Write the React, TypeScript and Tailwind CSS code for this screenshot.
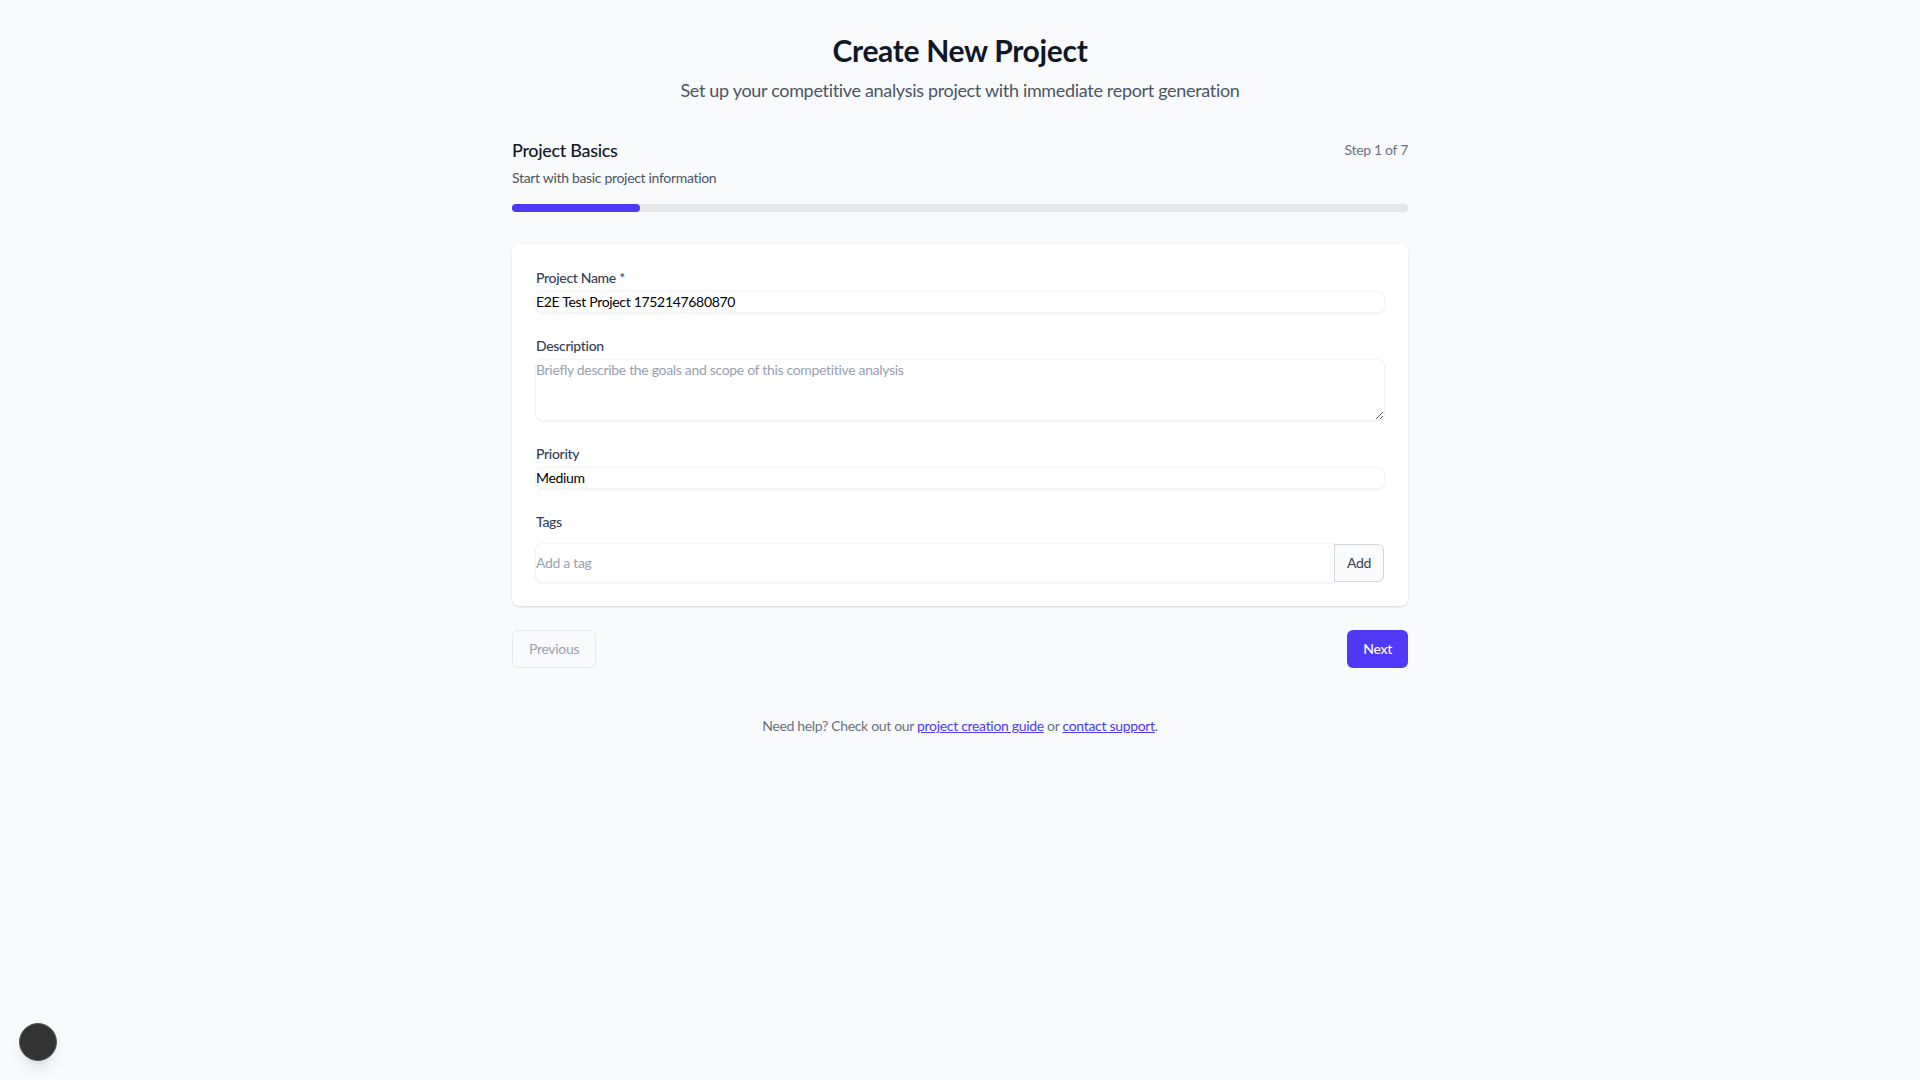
import { useState } from 'react';

const TOTAL_STEPS = 7;

export default function App() {
  const [name, setName] = useState('E2E Test Project 1752147680870');
  const [description, setDescription] = useState('');
  const [priority, setPriority] = useState('medium');
  const [tag, setTag] = useState('');
  const step = 1;

  return (
    <div
      className="min-h-screen bg-gray-50 tracking-[-0.02em]"
      style={{ fontFamily: 'Lato, "Noto Sans", sans-serif' }}
    >
      <div className="max-w-4xl mx-auto py-8">
        {/* Titolo */}
        <div className="text-center mb-8">
          <h1 className="text-3xl font-bold text-gray-900 mb-2">Create New Project</h1>
          <p className="text-lg text-gray-600">
            Set up your competitive analysis project with immediate report generation
          </p>
        </div>

        {/* Step header + progress */}
        <div className="mb-8">
          <div className="flex items-start justify-between">
            <div>
              <h2 className="text-lg font-medium text-gray-900">Project Basics</h2>
              <p className="mt-1 text-sm text-gray-600">Start with basic project information</p>
            </div>
            <span className="text-sm text-gray-500 pt-1">
              Step {step} of {TOTAL_STEPS}
            </span>
          </div>
          <div className="mt-4 h-2 w-full rounded-full bg-gray-200">
            <div
              className="h-2 rounded-full bg-indigo-600"
              style={{ width: `${(step / TOTAL_STEPS) * 100}%` }}
            />
          </div>
        </div>

        {/* Form */}
        <div className="bg-white rounded-lg shadow-sm p-6 flex flex-col gap-6">
          <div>
            <label className="block text-sm font-medium text-gray-700 mb-1">Project Name *</label>
            <input
              value={name}
              onChange={(e) => setName(e.target.value)}
              className="block w-full h-5 p-0 border-0 text-sm text-black rounded-md shadow-sm ring-1 ring-gray-100 outline-none"
            />
          </div>

          <div>
            <label className="block text-sm font-medium text-gray-700 mb-1">Description</label>
            <textarea
              rows={3}
              value={description}
              onChange={(e) => setDescription(e.target.value)}
              placeholder="Briefly describe the goals and scope of this competitive analysis"
              className="block w-full h-[60px] p-0 border-0 text-sm text-black rounded-md shadow-sm ring-1 ring-gray-100 outline-none placeholder:text-gray-400"
            />
          </div>

          <div>
            <label className="block text-sm font-medium text-gray-700 mb-1">Priority</label>
            <select
              value={priority}
              onChange={(e) => setPriority(e.target.value)}
              className="block w-full h-5 p-0 border-0 text-sm text-black bg-white rounded-md shadow-sm ring-1 ring-gray-100 outline-none appearance-none"
            >
              <option value="low">Low</option>
              <option value="medium">Medium</option>
              <option value="high">High</option>
            </select>
          </div>

          <div>
            <label className="block text-sm font-medium text-gray-700 mb-3">Tags</label>
            <div className="flex">
              <input
                value={tag}
                onChange={(e) => setTag(e.target.value)}
                placeholder="Add a tag"
                className="flex-1 p-0 border-0 text-sm text-black rounded-l-md shadow-sm ring-1 ring-gray-100 outline-none placeholder:text-gray-400"
              />
              <button className="h-[38px] px-3 text-sm text-gray-700 bg-gray-50 border border-gray-300 rounded-r-md">
                Add
              </button>
            </div>
          </div>
        </div>

        {/* Navigazione */}
        <div className="mt-6 flex justify-between">
          <button
            disabled
            className="h-[38px] px-4 text-sm text-gray-400 bg-gray-50 border border-gray-200 rounded-md"
          >
            Previous
          </button>
          <button className="h-[38px] px-[15px] text-sm font-medium text-white bg-indigo-600 border border-transparent rounded-md">
            Next
          </button>
        </div>

        <p className="mt-12 text-center text-sm text-gray-500">
          Need help? Check out our{' '}
          <a href="#" className="text-indigo-600 underline">project creation guide</a> or{' '}
          <a href="#" className="text-indigo-600 underline">contact support</a>.
        </p>
      </div>

      {/* Dev indicator */}
      <div className="fixed left-[19px] bottom-[19px] w-[38px] h-[38px] rounded-full bg-[#333] border border-[#555] shadow-lg" />
    </div>
  );
}
